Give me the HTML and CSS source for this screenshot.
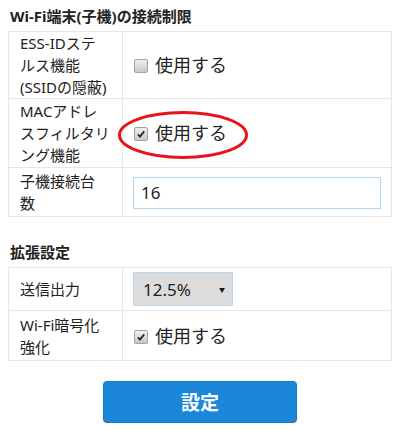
FILE: index.html
```html
<!DOCTYPE html>
<html lang="ja">
<head>
<meta charset="utf-8">
<link rel="stylesheet" href="styles.css">
</head>
<body>
<h2 class="sec-title">Wi-Fi端末(子機)の接続制限</h2>
<table class="settings">
  <tr class="r1">
    <th>ESS-IDステ<br>ルス機能<br>(SSIDの隠蔽)</th>
    <td><label class="opt"><span class="cb"></span>使用する</label></td>
  </tr>
  <tr class="r2">
    <th>MACアドレ<br>スフィルタリ<br>ング機能</th>
    <td class="mark-cell">
      <label class="opt"><span class="cb on"><svg viewBox="0 0 13 13"><path d="M3.2 6.8 L5.4 9.2 L10 3.6" /></svg></span>使用する</label>
      <svg class="ring" viewBox="0 0 132 50"><ellipse cx="66" cy="25" rx="63.5" ry="22.5"/></svg>
    </td>
  </tr>
  <tr class="r3">
    <th>子機接続台<br>数</th>
    <td><div class="text-in">16</div></td>
  </tr>
</table>

<h2 class="sec-title second">拡張設定</h2>
<table class="settings">
  <tr class="r4">
    <th>送信出力</th>
    <td><div class="sel"><span>12.5%</span><span class="arrow">▼</span></div></td>
  </tr>
  <tr class="r5">
    <th>Wi-Fi暗号化<br>強化</th>
    <td><label class="opt"><span class="cb on"><svg viewBox="0 0 13 13"><path d="M3.2 6.8 L5.4 9.2 L10 3.6" /></svg></span>使用する</label></td>
  </tr>
</table>

<div class="actions"><button class="submit">設定</button></div>
</body>
</html>
```

FILE: styles.css
```css
html, body {
  margin: 0;
  padding: 0;
  background: #fff;
}
body {
  padding: 0 8px;
  font-family: "Noto Sans", "Noto Sans CJK JP", sans-serif;
  color: #222;
}
.sec-title {
  font-size: 15px;
  font-weight: bold;
  line-height: 22px;
  margin: 5px 0 4px 2px;
}
.sec-title.second {
  margin-top: 24px;
  margin-bottom: 4px;
}
.settings {
  width: 100%;
  border-collapse: collapse;
  border: 1px solid #e3e3e3;
}
.settings th,
.settings td {
  border: 1px solid #e6e6e6;
  vertical-align: middle;
  text-align: left;
}
.settings th {
  width: 92px;
  font-weight: normal;
  font-size: 15px;
  line-height: 22px;
  padding: 0 10px 0 11px;
  white-space: nowrap;
}
.settings td {
  padding: 0 10px;
}
.r1 th { height: 66px; }
.r2 th { height: 68px; }
.r3 th { height: 48px; }
.r4 th { height: 42px; }
.r5 th { height: 49px; }
.opt {
  display: flex;
  align-items: center;
  font-size: 18px;
  line-height: 24px;
}
.cb {
  width: 12px;
  height: 12px;
  border: 1px solid #a3a3a3;
  border-radius: 2px;
  background: linear-gradient(#efefef, #c9c9c9);
  margin: 2px 7px 0 1px;
  display: flex;
  box-sizing: content-box;
}
.cb svg {
  width: 12px;
  height: 12px;
}
.cb svg path {
  fill: none;
  stroke: #2a2a2a;
  stroke-width: 2;
}
.mark-cell {
  position: relative;
}
.ring {
  position: absolute;
  left: -6px;
  top: 11px;
  width: 132px;
  height: 50px;
}
.ring ellipse {
  fill: none;
  stroke: #e8141b;
  stroke-width: 3;
}
.text-in {
  height: 30px;
  border: 1px solid #b3d6f5;
  font-size: 17px;
  line-height: 30px;
  padding: 0 7px;
  margin-top: 2px;
}
.sel {
  border: 1px solid #b9d9f2;
  background: #dcdcdc;
  font-size: 17px;
  display: flex;
  align-items: center;
  justify-content: space-between;
  padding: 0 7px 0 9px;
  box-sizing: border-box;
  width: 100px;
  height: 34px;
}
.sel .arrow {
  font-size: 6px;
  color: #111;
}
.actions {
  display: flex;
  justify-content: center;
  margin-top: 20px;
}
.submit {
  width: 194px;
  height: 42px;
  background: #1a87da;
  border: 1px solid #1479c8;
  border-radius: 4px;
  color: #fff;
  font-family: "Noto Sans", "Noto Sans CJK JP", sans-serif;
  font-size: 19px;
  font-weight: bold;
  box-shadow: 0 0 2px rgba(200, 150, 90, 0.45);
}
```
